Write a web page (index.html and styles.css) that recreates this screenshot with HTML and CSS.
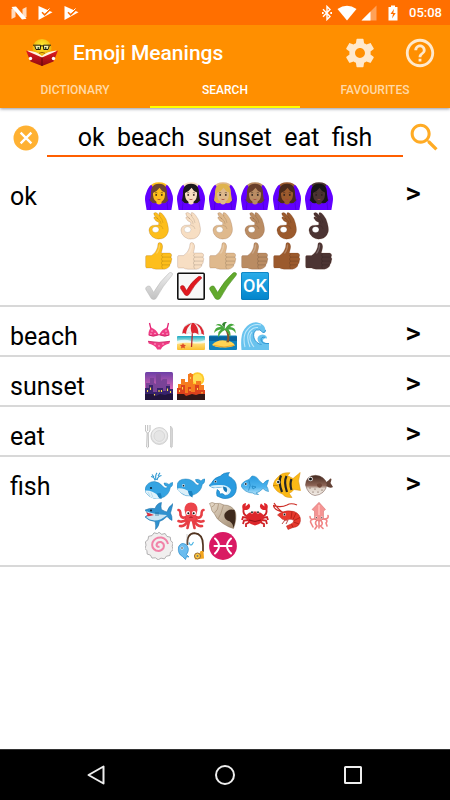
FILE: index.html
```html
<!DOCTYPE html>
<html lang="en">
<head>
<meta charset="utf-8">
<meta name="viewport" content="width=device-width, initial-scale=1">
<title>Emoji Meanings</title>
<link rel="stylesheet" href="styles.css">
</head>
<body>
<svg class="defs" aria-hidden="true">
  <defs>
    <linearGradient id="g-blue" x1="0" y1="0" x2="0" y2="1"><stop offset="0" stop-color="#2a9be0"/><stop offset=".6" stop-color="#4db4ee"/><stop offset="1" stop-color="#b9e4fa"/></linearGradient>
    <linearGradient id="g-ok" x1="0" y1="0" x2="0" y2="1"><stop offset="0" stop-color="#2badea"/><stop offset="1" stop-color="#0284cb"/></linearGradient>
    <linearGradient id="g-dusk" x1="0" y1="0" x2="0" y2="1"><stop offset="0" stop-color="#6b3fa6"/><stop offset=".6" stop-color="#d765b4"/><stop offset="1" stop-color="#f49ac0"/></linearGradient>
    <linearGradient id="g-sand" x1="0" y1="0" x2="0" y2="1"><stop offset="0" stop-color="#19a7c4"/><stop offset=".4" stop-color="#b9ecdf"/><stop offset=".5" stop-color="#ffe082"/><stop offset="1" stop-color="#fbc02d"/></linearGradient>
    <linearGradient id="g-silver" x1="0" y1="0" x2="0" y2="1"><stop offset="0" stop-color="#ededed"/><stop offset="1" stop-color="#c2c2c2"/></linearGradient>
    <linearGradient id="g-puffer" x1="0" y1="0" x2="0" y2="1"><stop offset="0" stop-color="#43291f"/><stop offset=".5" stop-color="#8d6455"/><stop offset=".65" stop-color="#ddd0c6"/><stop offset="1" stop-color="#f4efe9"/></linearGradient>
    <linearGradient id="g-shell" x1="0" y1="0" x2="1" y2="1"><stop offset="0" stop-color="#e8dccb"/><stop offset="1" stop-color="#a08a70"/></linearGradient>
    <radialGradient id="g-face" cx=".5" cy=".35" r=".65"><stop offset="0" stop-color="#ffee35"/><stop offset="1" stop-color="#eda400"/></radialGradient>
    <linearGradient id="g-book" x1="0" y1="0" x2="0" y2="1"><stop offset="0" stop-color="#e31b23"/><stop offset="1" stop-color="#8d0b10"/></linearGradient>
  </defs>
  <symbol id="ok-woman" viewBox="0 0 28 28">
    <path class="skin" d="M4.500 5Q7 .3 14 .3 21 .3 23.500 5L21 8H7Z"/>
    <path d="M6.300 2.800Q3 5 1.200 11-.6 15 .3 20L1.600 28H26.400L27.700 20Q28.600 15 26.800 11 25 5 21.700 2.800L19.500 6 21 14 19 20H9L7 14 8.500 6Z" fill="#6200ff"/>
    <path d="M4 17 6 21 5.200 28M24 17 22 21 22.800 28" fill="none" stroke="#4b00cf" stroke-width=".7"/>
    <path class="hair" d="M14 1.800C7.500 1.800 5.800 6.500 6 12L5 18.500Q7.500 22 11 21H17Q20.500 22 23 18.500L22 12C22.200 6.500 20.500 1.800 14 1.800Z"/>
    <path class="skin" d="M11.500 17H16.500V21.500Q14 23.500 11.500 21.500Z"/>
    <path class="skin" d="M8 11Q12 9.500 14.600 5.800 16 9 20 10.500V13Q19.500 20 14 20.500 8.500 20 8 13Z"/>
    <path d="M10 10.900Q11.200 10.200 12.300 10.900M15.700 10.900Q16.800 10.200 18 10.900" stroke="#35251e" stroke-width=".5" fill="none"/>
    <circle cx="11.200" cy="12.900" r=".9" fill="#2c211e"/><circle cx="16.800" cy="12.900" r=".9" fill="#2c211e"/>
    <path d="M11.600 16.800Q14 17.400 16.400 16.800 14 19 11.600 16.800Z" fill="#a2463d"/>
  </symbol>
  <symbol id="ok-hand" viewBox="0 0 28 28">
    <path class="skin edge" d="M8.800 1.200Q10.500-.4 12.400 1.400L15 4Q13 1.400 14.600.6 16.200 0 18.500 3.200 21.800 7 22.500 11.500 24 17 23.200 20 21.400 25.600 16.500 26.800 11 28 7.500 25 3.700 21.500 3.900 18 4.200 14.400 7.400 13.400L13.600 13 13.800 10.400Q10 9 8.900 6.200 8.500 4.700 10 4.800L13 6.800Q8 3.200 8.800 1.200Z"/>
    <ellipse cx="10.600" cy="17.600" rx="3.300" ry="2.900" fill="#fff" stroke="#0003" stroke-width=".5"/>
    <path d="M14.400 4Q17.500 7 18 11M12.600 6.600Q16 8.500 16.200 12.200M14.200 13.400Q17.600 13.600 18 17" fill="none" stroke="#0002" stroke-width=".8"/>
  </symbol>
  <symbol id="thumb" viewBox="0 0 28 28">
    <path class="skin edge" d="M1.500 13.600H6.500Q11.600 10 12.600 5L13 1.600Q14.200-.4 16.200 1 18.500 3 17.200 7.600L16.300 11H24.600Q27 11.500 26.600 13.800L26 15.200Q27.600 16.600 26.300 19 26.600 21 25 22.600 25 24.500 23.200 25.600 22 27 19.600 27.200H11Q8 27 6.600 26H1.500Q.6 25.800.6 24V15Q.6 13.800 1.500 13.600Z"/>
    <path d="M17.600 15.100H26M17.200 19.100H26.200M17.200 22.900H25M17.600 12Q15.600 13.500 17.600 15.100 15.400 17 17.300 19.100 15.400 21 17.200 22.900 16 25 17.800 26.800" fill="none" stroke="#0003" stroke-width=".7"/>
    <path d="M14.500 2.500Q14.800 7 11.500 11.500" fill="none" stroke="#fff4" stroke-width="1.200"/>
  </symbol>
  <symbol id="check" viewBox="0 0 28 28"><path d="M1.200 15.200Q3 13.200 5 14.300L8.600 20.400Q15 9 24.300.8 26-.2 27.300 1.300 27.800 2.500 26.800 3.700 17.600 14 11 26.600 8.600 28.600 6.300 26.600L.8 17.400Q.4 16 1.200 15.200Z"/></symbol>
</svg>

<div class="screen">
  <header>
    <div class="status">
      <div class="group">
        <svg class="i16" viewBox="0 0 16 14"><path d="M.500 3 4.500 1V11L.500 13ZM11.500 3 15.500 1V11L11.500 13Z" fill="#fff" opacity=".75"/><path d="M.500 1 5 .6 15.500 12.800 11 13.400Z" fill="#fff"/></svg>
        <svg class="i16" viewBox="0 0 16 14"><path d="M1.500 0 15.500 6.200 1.500 14Z" fill="#fff"/><path d="m5 6.300 2.600 2.600L14 2.600" stroke="#ff6f00" stroke-width="1.500" fill="none"/><path d="m8.500 6.500 4-4" stroke="#fff" stroke-width="1"/></svg>
        <svg class="i16" viewBox="0 0 16 14"><path d="M1.500 0 15.500 6.200 1.500 14Z" fill="#fff"/><path d="m5 6.300 2.600 2.600L14 2.600" stroke="#ff6f00" stroke-width="1.500" fill="none"/><path d="m8.500 6.500 4-4" stroke="#fff" stroke-width="1"/></svg>
      </div>
      <div class="group right">
        <div class="radios">
          <svg class="i12" viewBox="0 0 12 16"><path d="M2 4.300 9 11.400 6 14.500V1.500L9 4.600 2 11.700" fill="none" stroke="#fff" stroke-width="1.400"/><path d="M1 7h1.700v2H1zM9.300 7H11v2H9.300z" fill="#fff"/></svg>
          <svg class="i20" viewBox="0 0 20 16"><path d="M.5 4Q10-2.500 19.500 4L10 15.500Z" fill="#fff"/></svg>
          <svg class="i16" viewBox="0 0 16 16"><path d="M15.500.5V15.500H.5Z" fill="#fff" opacity=".35"/><path d="M9.500 6.500V15.500H.5Z" fill="#fff"/></svg>
        </div>
        <svg class="i12" viewBox="0 0 12 16"><path d="M4 .5h4V2h2.500v13.500h-9V2H4Z" fill="#fff"/><path d="M7 4 3.500 9H6l-1 4.500L8.700 8H6.300Z" fill="#ff6f00"/></svg>
        <time>05:08</time>
      </div>
    </div>
    <div class="appbar">
      <svg class="logo" viewBox="0 0 34 30">
        <circle cx="17" cy="10.500" r="9.500" fill="url(#g-face)"/>
        <circle cx="13" cy="9.500" r="2.800" fill="#f8f0aa"/><circle cx="21" cy="9.500" r="2.800" fill="#f8f0aa"/>
        <path d="M8 7.200H15.600L15.300 11.500H11L9.800 8M26 7.200H18.400L18.700 11.500H23L24.200 8M15.600 8.200Q17 7.200 18.400 8.200" fill="none" stroke="#231b08"/>
        <circle cx="13.400" cy="10" r="1" fill="#24502e"/><circle cx="20.600" cy="10" r="1" fill="#24502e"/>
        <path d="M14 15.300Q17 13.500 20 15.300" stroke="#9a6500" fill="none"/>
        <path d="M2.500 12.600Q12 13.500 17 18 22 13.500 31.500 12.600L29 17 17 24 5 17Z" fill="#fff4df"/>
        <path d="M1 12.500 17 19.400 33 12.500 28.500 23.500 17 28 5.500 23.500Z" fill="url(#g-book)"/>
        <path d="M17 19.400V28" stroke="#650509"/>
        <circle cx="5.500" cy="20.500" r="1.700" fill="#fff"/><circle cx="28.500" cy="20.500" r="1.700" fill="#fff"/>
      </svg>
      <h1>Emoji Meanings</h1>
      <button class="action" aria-label="Settings"><svg viewBox="0 0 24 24"><path d="M19.430 12.980c.04-.32.07-.64.07-.98s-.03-.66-.07-.98l2.110-1.650c.19-.15.24-.42.12-.64l-2-3.460c-.12-.22-.39-.3-.61-.22l-2.490 1c-.52-.4-1.080-.73-1.690-.98l-.38-2.650C14.460 2.180 14.250 2 14 2h-4c-.25 0-.46.18-.49.42l-.38 2.650c-.61.25-1.170.59-1.690.98l-2.490-1c-.23-.09-.49 0-.61.22l-2 3.460c-.13.22-.07.49.12.64l2.110 1.650c-.04.32-.07.65-.07.98s.03.66.07.98l-2.110 1.650c-.19.15-.24.42-.12.64l2 3.460c.12.22.39.3.61.22l2.490-1c.52.4 1.080.73 1.690.98l.38 2.650c.03.24.24.42.49.42h4c.25 0 .46-.18.49-.42l.38-2.650c.61-.25 1.170-.59 1.690-.98l2.490 1c.23.09.49 0 .61-.22l2-3.460c.12-.22.07-.49-.12-.64l-2.110-1.650zM12 15.500c-1.930 0-3.500-1.570-3.500-3.500s1.570-3.500 3.500-3.500 3.500 1.570 3.500 3.500-1.570 3.500-3.500 3.500z"/></svg></button>
      <button class="action" aria-label="Help"><svg viewBox="0 0 24 24"><path d="M11 18h2v-2h-2v2zm1-16C6.480 2 2 6.480 2 12s4.480 10 10 10 10-4.480 10-10S17.520 2 12 2zm0 18c-4.410 0-8-3.590-8-8s3.590-8 8-8 8 3.590 8 8-3.590 8-8 8zm0-14c-2.210 0-4 1.790-4 4h2c0-1.100.9-2 2-2s2 .9 2 2c0 2-3 1.750-3 5h2c0-2.250 3-2.500 3-5 0-2.210-1.790-4-4-4z"/></svg></button>
    </div>
    <nav class="tabs">
      <a href="#dictionary">DICTIONARY</a>
      <a href="#search" class="active" aria-current="page">SEARCH</a>
      <a href="#favourites">FAVOURITES</a>
    </nav>
  </header>

  <main>
    <form class="search">
      <button type="reset" class="clear" aria-label="Clear"><svg viewBox="0 0 24 24"><circle cx="12" cy="12" r="10" fill="#ffb132"/><path d="m7.700 7.700 8.600 8.600M16.300 7.700l-8.600 8.600" stroke="#fff" stroke-width="1.900"/></svg></button>
      <input type="text" aria-label="Search words" value="ok  beach  sunset  eat  fish">
      <button type="button" class="go" aria-label="Search"><svg viewBox="0 0 24 24"><path fill="#ffab24" d="M15.500 14h-.79l-.28-.27C15.410 12.590 16 11.110 16 9.500 16 5.910 13.090 3 9.500 3S3 5.910 3 9.500 5.910 16 9.500 16c1.610 0 3.090-.59 4.230-1.570l.27.28v.79l5 4.990L20.490 19l-4.990-5zm-6 0C7.010 14 5 11.990 5 9.500S7.010 5 9.500 5 14 7.010 14 9.500 11.990 14 9.500 14z"/></svg></button>
    </form>

    <ul class="results">
      <li>
        <h2>ok</h2>
        <div class="emojis">
          <svg class="t0"><use href="#ok-woman"/></svg><svg class="t1"><use href="#ok-woman"/></svg><svg class="t2"><use href="#ok-woman"/></svg><svg class="t3"><use href="#ok-woman"/></svg><svg class="t4"><use href="#ok-woman"/></svg><svg class="t5"><use href="#ok-woman"/></svg>
          <svg class="t0"><use href="#ok-hand"/></svg><svg class="t1"><use href="#ok-hand"/></svg><svg class="t2"><use href="#ok-hand"/></svg><svg class="t3"><use href="#ok-hand"/></svg><svg class="t4"><use href="#ok-hand"/></svg><svg class="t5"><use href="#ok-hand"/></svg>
          <svg class="t0"><use href="#thumb"/></svg><svg class="t1"><use href="#thumb"/></svg><svg class="t2"><use href="#thumb"/></svg><svg class="t3"><use href="#thumb"/></svg><svg class="t4"><use href="#thumb"/></svg><svg class="t5"><use href="#thumb"/></svg>
          <svg viewBox="0 0 28 28"><use href="#check" fill="url(#g-silver)" stroke="#b4b4b4" stroke-width=".5"/></svg>
          <svg viewBox="0 0 28 28"><rect x=".8" y="1.200" width="26.400" height="26" rx="1" fill="#f8f8f8" stroke="#111" stroke-width="1.600"/><path d="M3.500 14.500Q5 12.600 7 14L9.500 18.500Q14 10 21.500 4.500 24 3.500 24.800 6 17 13 12.200 22.300 10.300 25 7.800 22.800L3.600 16.500Z" fill="#e0181f" stroke="#a90d12" stroke-width=".5"/></svg>
          <svg viewBox="0 0 28 28"><use href="#check" fill="#62a92d" stroke="#458b1a" stroke-width=".6"/></svg>
          <svg viewBox="0 0 28 28"><rect width="28" height="28" rx="2" fill="url(#g-ok)"/><rect x=".4" y=".4" width="27.200" height="27.200" rx="1.800" fill="none" stroke="#0878b7" stroke-width=".8"/><text x="14" y="20" text-anchor="middle" class="ok-text">OK</text></svg>
        </div>
        <button class="more" aria-label="Open ok">&gt;</button>
      </li>
      <li>
        <h2>beach</h2>
        <div class="emojis">
          <svg viewBox="0 0 28 28"><path d="M4.500 1 6.300 8.500M23.500 1 21.700 8.500" stroke="#e22374" stroke-width="1.300"/><path d="M6 5.500Q11.500 7.500 13.800 12.800 8 15.500 3.600 13 3 9 6 5.500ZM22 5.500Q16.500 7.500 14.200 12.800 20 15.500 24.400 13 25 9 22 5.500ZM3 19.300Q14 21.500 25 19.300L24.300 21.600Q18 23 15.800 27.400H12.200Q10 23 3.700 21.600Z" fill="#ef3c85"/><path d="M3.600 13Q8 15.500 13.800 12.800H14.200Q20 15.500 24.400 13M3 19.300Q14 21.500 25 19.300" fill="none" stroke="#c9175c" stroke-width=".8"/><g fill="#ffb5d2"><circle cx="7" cy="9" r=".8"/><circle cx="10" cy="11.500" r=".8"/><circle cx="6" cy="12" r=".8"/><circle cx="21" cy="9" r=".8"/><circle cx="18" cy="11.500" r=".8"/><circle cx="22" cy="12" r=".8"/><circle cx="10" cy="22" r=".8"/><circle cx="14" cy="24" r=".8"/><circle cx="18" cy="22" r=".8"/></g></svg>
          <svg viewBox="0 0 28 28"><rect y="14" width="28" height="14" rx="1" fill="url(#g-sand)"/><path d="M0 19Q8 16.500 14 19T28 18V21Q20 22 14 21T0 22Z" fill="#fff" opacity=".7"/><path d="M16 1 14.500 25" stroke="#b6262e" stroke-width="1.200"/><path d="M5.300 11.500Q6 1 16 .9 27 2 27 13 24 10.500 21.500 12.500 18 9.500 15 12 11.500 9.500 9 12 7 10.500 5.300 11.500Z" fill="#f4f4f4" stroke="#bbb" stroke-width=".4"/><path d="M5.300 11.500Q6 3 15 1 9.500 5 9 12 7 10.500 5.300 11.500ZM15 1H17Q21.500 5 21.500 12.500 18 9.500 15 12 12.500 5 15 1ZM18 1.200Q27 3.500 27 13 25.500 11.800 24.500 11.700 24 5 18 1.200Z" fill="#dd2630"/><path d="m6 21 .9 1.800 2.100.2-1.500 1.400.5 2.200-2-1.100-2 1.100.4-2.200L2.900 23l2.200-.2Z" fill="#dd4b27"/></svg>
          <svg viewBox="0 0 28 28"><rect y="13.500" width="28" height="14.500" rx="1" fill="#0f82bd"/><path d="M0 14.500H28V19H0Z" fill="#08639d"/><path d="M3 23Q8 17.500 16 18.500 24 19 26 23.500 20 26 14 25.300 7 26 3 23Z" fill="#ffd454"/><path d="M5 23.500Q15 26.500 25 23.500" stroke="#e9a62c" fill="none"/><path d="M15.500 7Q20 13 17.300 20.200H20Q21.500 12 17.500 6.500Z" fill="#85532a"/><path d="M16 7Q11-.5 6.500 3.500 10 2.500 12 5 6 4 5 11 8 7.500 12 7.500 8 10 9.500 15.500 11 10 16 8 19 9.500 21 15 22.600 11 19.500 7.500 25 7 26.500 11.500 27.500 5.500 21 5 24 2.500 26 3.500 21-1.500 16 7Z" fill="#48a83d"/><path d="M16 7Q15 1.500 18 0 14-.5 13 2.500Z" fill="#33852f"/></svg>
          <svg viewBox="0 0 28 28"><path d="M.5 28Q-1 13 3.500 7 9-.5 16.500.4 24 2 24.500 8 24.600 11 22 10.500 19 6.500 15.500 8 11.500 10 13 16 15 21.500 20.500 22.500 16.500 20.500 16.500 16.500 17 13 21.500 12.500 26 13 26 16.500 23 15.500 22 18 21.500 21 28 21.500V28Z" fill="#69c3ee"/><path d="M4 25Q1 13 7 7 12 1 20 3M9 25Q4 13 10 8 13 5 17 5.500M13 25Q6 16 11 10" fill="none" stroke="#bde7fa" stroke-width="1.100"/><path d="M24.500 8Q24.600 11 22 10.500 19 6.500 15.500 8 11.500 10 13 16 15 21.500 20.500 22.500M24 15.300Q20 14.500 20 18 21 22 28 21.500" fill="none" stroke="#2790ce" stroke-width=".9"/></svg>
        </div>
        <button class="more" aria-label="Open beach">&gt;</button>
      </li>
      <li>
        <h2>sunset</h2>
        <div class="emojis">
          <svg viewBox="0 0 28 28"><rect width="28" height="28" rx="1.500" fill="url(#g-dusk)"/><path d="M1 28V11H5V6H9V11L11 12V2H16V9L18 7H22V12H25V28Z" fill="#794397"/><path d="M0 28V16H4V13H8V20H12V16H18V19H21V14H25V17H28V28Z" fill="#37236b"/><path d="M0 28V22H8L11 24 15 22 20 23 23 22H28V28Z" fill="#21143d"/><path d="M5.500 15.500V18M2.500 18V20M14 18V20M16.500 18V20M22.500 16.500V19M25.500 19V21M9.500 22V23.500" stroke="#ffe046" stroke-width="1.100"/></svg>
          <svg viewBox="0 0 28 28"><circle cx="20.500" cy="7" r="6.800" fill="#ffc928"/><circle cx="20.500" cy="7" r="5" fill="#ffe056"/><path d="M1 28V12H4V7H8V10H11V2H12.500V1H14.500V2H16V12H19V9H24V13H27V28Z" fill="#f57c1f"/><path d="M0 28V16H4V13H8V21H11V15H14V20H18V13H22V18H28V28Z" fill="#dc421d"/><path d="M0 28V22H7L9 24 15 22 19 23 22 22H28V28Z" fill="#321717"/><path d="M5.500 15V17.500M2.500 18V20M13 17V19M13.500 5V7M20.500 16V18M25 20V21.500" stroke="#ffd749" stroke-width="1.100"/></svg>
        </div>
        <button class="more" aria-label="Open sunset">&gt;</button>
      </li>
      <li>
        <h2>eat</h2>
        <div class="emojis">
          <svg viewBox="0 0 28 28"><ellipse cx="14.300" cy="14" rx="8.500" ry="8.500" fill="#dedede" stroke="#bfbfbf" stroke-width=".6"/><circle cx="14.300" cy="13.600" r="7.400" fill="#ececec"/><circle cx="14.300" cy="14" r="5.400" fill="#e5e5e5" stroke="#d0d0d0" stroke-width=".7"/><path d="M.4 3V8Q.7 10.300 2.200 10.600L1.700 25Q2.500 26.500 3.500 25L3.200 10.600Q4.700 10.300 5 8V3M2.700 3V9" fill="none" stroke="#b6b6b6" stroke-width=".9"/><path d="M25.500 25V4Q27.800 5.500 27.700 9V16L27.200 25Q26.500 26.500 25.500 25Z" fill="#d6d6d6" stroke="#b3b3b3" stroke-width=".5"/></svg>
        </div>
        <button class="more" aria-label="Open eat">&gt;</button>
      </li>
      <li>
        <h2>fish</h2>
        <div class="emojis">
          <svg viewBox="0 0 28 28"><path d="M10 8.500Q9.500 5 6 4.500M11 8Q10 3 12 .8M12 8Q13 4 16.500 3.500M7 2.500 9 5M15 .8 13 4" fill="none" stroke="#2c97d1" stroke-width="1.100"/><path d="M0 17Q2 9.500 9.500 9.500 14.500 10 18 14.500 21.500 17.500 22.500 14.500 19 14 19 11 21.500 10.500 24 12.500 25.500 10.500 28 10.500 28 14 25.300 15.500 24 24 16 26 9 28 4 24 0 21 0 17Z" fill="#36a4e2" stroke="#1c80ba" stroke-width=".5"/><path d="M.2 18.500Q7 18 13 23.500L14.500 26.500Q8 27.700 4 24 .5 21.700.2 18.500Z" fill="#e1f3fb"/><path d="M3 20 5 24M6 20.500 8 25.500" stroke="#9fcbdf" stroke-width=".6"/><path d="M12 21.500Q13 26 16.500 27 17 23.500 15.500 21Z" fill="#1b82bf"/><circle cx="6" cy="16" r="1.100" fill="#123"/></svg>
          <svg viewBox="0 0 28 28"><path d="M0 14Q.5 7 8.500 7 15 7 18.500 12 21.500 14.500 22.300 11.500 18.500 10.500 18.500 7.500 21.800 6.500 24 9 25.500 6.800 28 7 28.300 10.500 25.300 12.500 24 20.500 16 23 9 25.500 3.500 20.500 0 18 0 14Z" fill="#36a4e2" stroke="#1c80ba" stroke-width=".5"/><path d="M.3 16.500Q7 15.500 13 20.500L13.500 23.600Q8 24 3.500 20.500 .5 18.500.3 16.500Z" fill="#dceff8"/><path d="M11 19Q11.500 24 15.500 25.500 16.500 22 14.800 19Z" fill="#1b82bf"/><circle cx="6.500" cy="13.500" r="1.500" fill="#e8f5fb"/><circle cx="6.500" cy="13.700" r=".9" fill="#123"/></svg>
          <svg viewBox="0 0 28 28"><path d="M0 13.500 2.500 11Q5 5.500 11.500 4 14 .5 20.500.5 19 2 19.200 4 28 8 27.400 16 27 24 20 26 14.500 28 8 24 7 21 8.200 17.500 11 18.500 10.800 22 14 20.500 16 23.500 21 22.500 21.500 17.500 16 13.500 13 15L8 15.500Q4 17 0 13.500Z" fill="#299be0" stroke="#147ab8" stroke-width=".6"/><path d="M1 14Q6 12.500 12 13 19 13 22 18 21 22.500 16.500 23.600 19.800 20.500 18 17.500 14.500 14.500 8 15.500 4 16.500 1 14Z" fill="#d8f0fb"/><path d="M14 14.500Q14 19 17.500 20.500 19 18 17.500 15.500Z" fill="#1679b7"/><circle cx="6.500" cy="9.500" r="1.300" fill="#fff"/><circle cx="6.500" cy="9.600" r=".9" fill="#123"/></svg>
          <svg viewBox="0 0 28 28"><path d="M8 7.500 11 4Q16 4 18 8.500L22 12Q25 8 27.500 8 26.500 12 25.500 14 27 16 27.500 19.500 24 19 22 16.500 18 20.500 15 21L17.500 22.500 13 22 12 21Q4 21 0 14 1 9.500 8 7.500Z" fill="url(#g-blue)" stroke="#238bc5" stroke-width=".6"/><path d="M8 8.500Q10.500 13.500 7.500 18.500M11 14 15 15 12 17Z" fill="none" stroke="#1b81bd" stroke-width=".7"/><circle cx="4.800" cy="12" r="1.500" fill="#fff"/><circle cx="4.800" cy="12" r=".9" fill="#123"/></svg>
          <svg viewBox="0 0 28 28"><path d="M5 5Q9 0 17 .8L14.500 3.500 20 6.500 27.200.5 25.500 9 27.500 18.500 21 17.500Q18 21 16 21L19 25.500Q12 26 9.500 22 3 20 0 13.500 1 8 5 5Z" fill="#fbb916" stroke="#d99006" stroke-width=".5"/><path d="M8 3.500Q5 10 9 20M13.500 4Q10.500 10 14 20M18.500 7Q16.500 12 18.500 18" fill="none" stroke="#242426" stroke-width="2.200"/><path d="M0 13.500Q3 13 5 14" stroke="#cc8709" fill="none"/><circle cx="5.300" cy="10" r="2" fill="#fff"/><circle cx="5.300" cy="10" r="1.300" fill="#182a37"/></svg>
          <svg viewBox="0 0 28 28"><path d="M20 11 24 8Q26 5.500 26.500 7.500L25.500 11 28 15Q25.500 17 21 14Z" fill="#634236"/><path d="M.5 13Q1 3.500 10.500 3.300 20 4 22 12.500 20 22.500 10 23.500 3 22.500.5 13Z" fill="url(#g-puffer)" stroke="#68493c" stroke-width=".5"/><path d="M12 12Q17 10 17 14 15 17.500 12 14Z" fill="#71493a"/><g fill="#5e4337"><circle cx="5" cy="16" r=".6"/><circle cx="8" cy="20" r=".6"/><circle cx="13" cy="20" r=".6"/><circle cx="10" cy="17" r=".6"/><circle cx="17" cy="18" r=".6"/></g><circle cx="5.500" cy="7" r="2.300" fill="#fff"/><circle cx="5.500" cy="7" r="1.500" fill="#111"/></svg>

          <svg viewBox="0 0 28 28"><path d="M0 8Q5 5.500 10 6.500 12 1 16.500.5 15.500 4.500 16.500 7.500 20 9.500 22 10 23 5 28 1.500 26.500 8 25.500 11 27.500 14.500 27 18.500 23.500 16.500 22 14.500 18 18.500 14.500 19.500 14 24.500 10.500 27.500 11 23 10 19.500 4 19 0 15 1 13.500 4 13Z" fill="#2f91cf" stroke="#1c6fa5" stroke-width=".5"/><path d="M1 9Q8 12.500 22 13 16 18.500 9.500 18.500 4 18 1 15L5 12.700Z" fill="#cbe5f3"/><path d="M1 10.500Q5 11 9 13 5 14.500 1.500 14 3.500 13 1 10.500Z" fill="#dd3341"/><path d="M11 10V14M13 10V14" stroke="#1e658f" stroke-width=".7"/><circle cx="6" cy="8.400" r="1" fill="#123"/></svg>
          <svg viewBox="0 0 28 28"><g fill="none" stroke="#e73e44" stroke-width="2.600" stroke-linecap="round"><path d="M9 15Q5 17 3.500 13 3.500 8 1.500 8M19 15Q23 17 24.500 13 24.500 8 26.500 8M10 17Q6 21 1.500 19M18 17Q22 21 26.500 19M11 18Q8 25 3 24M17 18Q20 25 25 24M12 19 10.500 26M16 19 17.500 26"/></g><path d="M7.500 8Q7.500.5 14 .4 20.500.5 20.500 8L19 14Q20 19 14 19.500 8 19 9 14Z" fill="#ec444a"/><circle cx="11" cy="11" r="2" fill="#fff"/><circle cx="17" cy="11" r="2" fill="#fff"/><circle cx="11.300" cy="11.200" r="1" fill="#111"/><circle cx="16.700" cy="11.200" r="1" fill="#111"/><path d="M12.500 15.500Q14 14.500 15.500 15.500" stroke="#9d1623" fill="none"/></svg>
          <svg viewBox="0 0 28 28"><path d="M.5 1.500Q3-.5 6 1.500 11 .5 15 3 23 3 26.500 10 28 17 24.500 26.500 19 25 14 21.500 7 17 5.500 12 2 9 2 5Z" fill="url(#g-shell)" stroke="#877056" stroke-width=".5"/><path d="M15.500 12Q19 6 25.500 8 28 16 24.500 26 24 20 18.500 18.500 14.500 16 15.500 12Z" fill="#3e291c"/><path d="M2.500 5Q5 4.500 6 1.500M5.500 11Q9.500 8 9.500 2M9 17Q12 13 14.500 3" stroke="#a58d72" stroke-width=".7" fill="none"/></svg>
          <svg viewBox="0 0 28 28"><g fill="none" stroke="#cf2025" stroke-width="1.800"><path d="M6 14Q1 12 3 6M22 14Q27 12 25 6M7 16 2 15 1 18M21 16 26 15 27 18M8 18 3 18.500 2 22M20 18 25 18.500 26 22M9 20 5 22 5 25M19 20 23 22 23 25"/></g><path d="M2 8Q-.5 2 5 1L4.500 4.500 8 1.500Q11 6 6 8ZM26 8Q28.500 2 23 1L23.500 4.500 20 1.500Q17 6 22 8Z" fill="#df262b"/><path d="M5 14Q8 9 14 9.500 20 9 23 14 23 21.500 14 23.500 5 21.500 5 14Z" fill="#dc262b"/><path d="M8 18Q14 21 20 18" stroke="#951116" fill="none"/><circle cx="11" cy="10" r="1.500" fill="#fff"/><circle cx="17" cy="10" r="1.500" fill="#fff"/><circle cx="11" cy="10.200" r=".9" fill="#111"/><circle cx="17" cy="10.200" r=".9" fill="#111"/></svg>
          <svg viewBox="0 0 28 28"><path d="M10 10Q1 8 .5 3.500 8 6 14 3 18 .5 24 3M9 10Q4 6 1 1" fill="none" stroke="#cc2c24" stroke-width="1.200"/><path d="M7 11Q14 7.500 21 9.500 28 12 27.400 19 26.500 25 20 25.500L15 27.500 13.500 24 18 22Q22 20 20 17.500 16 16.500 13 18.500 9 18 7 15L4.500 13Z" fill="#e6392d" stroke="#b51e18" stroke-width=".5"/><path d="M19 9.500 18 16.500M23 11 20 17.500M27 15.500 21 18.500M26 22 20.500 20M20 25.500 18.500 22M12 18 9 22M15 18 13 22" stroke="#a91d17" stroke-width=".8"/><circle cx="11.500" cy="12.500" r="1.400" fill="#fff"/><circle cx="11.500" cy="12.500" r=".9" fill="#111"/></svg>
          <svg viewBox="0 0 28 28"><g fill="none" stroke="#f18484" stroke-width="1.600" stroke-linecap="round"><path d="M11 17Q4 17 6 21T8 25M17 17Q24 17 21 21L22 24M12 18Q9 21 12 24L10 27M15.500 18Q19 22 15.500 24L18 26.500M14 18V26M5 14.500Q5 18 9 17M23 13.500Q24 17 19 17"/></g><path d="M14 .3 20.500 7.500 18.500 9 18.500 16.500Q17 19 14 19 11 19 9.500 16.500V9L7 7.500Z" fill="#f49493" stroke="#d66667" stroke-width=".5"/><path d="M14 3V13" stroke="#ffb5b1" stroke-width="2"/><circle cx="11.300" cy="15.500" r="1" fill="#fff"/><circle cx="16.800" cy="15.500" r="1" fill="#fff"/><circle cx="11.300" cy="15.700" r=".6" fill="#3b1e22"/><circle cx="16.800" cy="15.700" r=".6" fill="#3b1e22"/></svg>

          <svg viewBox="0 0 28 28"><path d="m14 .3 2.700 2 3.400-.8 1.800 2.900 3.400.8.400 3.400 2.500 2.400-1 3.300 1 3.400-2.700 2.300-.6 3.500-3.500.7-2 2.700-3.400-.8-2.800 1.700-2.800-2-3.400.3-1.600-3-3.200-1-.3-3.400L0 16.500l1-3.300-.6-3.400L3 7.700l.6-3.400L7 3.600 9 .8l3.300.8Z" fill="#f1efef" stroke="#a09e9f" stroke-width=".8"/><path d="M14.500 14.500Q12 15.500 11.500 13 12 9.500 16 10 20 11.500 18.500 16 16 20 11 18.500 6 16 7.500 10.500 10 5 16.500 5.500 22 7 23 12" fill="none" stroke="#f183a8" stroke-width="2"/></svg>
          <svg viewBox="0 0 28 28"><path d="M10.500 13Q9.500 1.500 17.500 1.200 26 2 26 13V20" fill="none" stroke="#51331f" stroke-width="1.700"/><path d="M10 2V15" stroke="#999" stroke-width=".5"/><path d="M1.500 15Q4 9.500 9 12.500 13.500 17 9.500 22.500L12 25 9.500 24.700 8.500 27.500 5.500 24.500Q.5 22 1.500 15Z" fill="#6bbcef" stroke="#258bcb" stroke-width=".7"/><path d="M12 10.500Q13 14 15 12.500L16.500 10" fill="none" stroke="#4ab4e3" stroke-width="1.100"/><circle cx="5" cy="16" r="1.500" fill="#fff"/><circle cx="5" cy="16" r=".8" fill="#123"/><path d="M18 27.500 27 26.500 26.500 19 23.500 19 22.500 22 17 23Z" fill="#f3a51f"/><circle cx="20.500" cy="24" r="3" fill="#ffc93c" stroke="#9b6c32"/><circle cx="20.500" cy="24" r="1" fill="#777"/></svg>
          <svg viewBox="0 0 28 28"><circle cx="14" cy="14" r="13.900" fill="#d91a63"/><path d="M6 6.500Q14 14 6 21.500M22 6.500Q14 14 22 21.500M5.500 14H22.500" fill="none" stroke="#fff" stroke-width="2" stroke-linecap="round"/></svg>
        </div>
        <button class="more" aria-label="Open fish">&gt;</button>
      </li>
    </ul>
  </main>

  <footer class="navbar">
    <button aria-label="Back"><svg viewBox="0 0 24 24"><path d="M18.500 3.500V20.500L3.500 12Z"/></svg></button>
    <button aria-label="Home"><svg viewBox="0 0 24 24"><circle cx="12" cy="12" r="9"/></svg></button>
    <button aria-label="Recent apps"><svg viewBox="0 0 24 24"><rect x="4" y="4" width="16" height="16" rx=".5"/></svg></button>
  </footer>
</div>
</body>
</html>
```
FILE: styles.css
```css
* { box-sizing: border-box; }
body {
  margin: 0;
  font-family: Roboto, "Liberation Sans", sans-serif;
  background: #fff;
  color: #000;
}
button {
  border: 0;
  padding: 0;
  background: none;
  font: inherit;
  color: inherit;
  display: flex;
  align-items: center;
  justify-content: center;
}
svg { display: block; flex: none; }
.defs { position: absolute; width: 0; height: 0; }
.screen {
  min-height: 100vh;
  display: flex;
  flex-direction: column;
}

header {
  background: #ff8f00;
  color: #fff;
  box-shadow: 0 1px 3px rgba(40, 50, 80, .5);
}
.status {
  height: 25px;
  padding: 0 8px 0 11px;
  background: #ff6f00;
  display: flex;
  align-items: center;
  justify-content: space-between;
}
.group { display: flex; align-items: center; gap: 10px; }
.radios { display: flex; align-items: center; gap: 4px; }
.i12 { width: 12px; height: 16px; }
.i16 { width: 16px; height: 16px; }
.i20 { width: 20px; height: 16px; }
time { font-size: 13px; font-weight: 500; }

.appbar {
  height: 55px;
  padding-left: 25px;
  display: flex;
  align-items: center;
}
.logo { width: 34px; height: 30px; }
h1 {
  flex: 1;
  margin: 0 0 0 14px;
  font-size: 21px;
  font-weight: 500;
}
.action { width: 60px; height: 55px; }
.action svg { width: 34px; height: 34px; fill: #ffe9cc; }

.tabs { display: grid; grid-template-columns: repeat(3, 1fr); }
.tabs a {
  height: 28px;
  line-height: 20px;
  border-bottom: 2px solid transparent;
  text-align: center;
  text-decoration: none;
  font-size: 12px;
  font-weight: 500;
  color: #ffd9a6;
}
.tabs .active { color: #fff; border-color: #ff0; }

main { flex: 1; }
.search {
  padding: 10px 0;
  display: grid;
  grid-template-columns: 47px 1fr 47px;
  align-items: center;
}
.search input {
  width: 100%;
  height: 39px;
  padding: 2px 0 0;
  border: 0;
  border-bottom: 2px solid #ff5f00;
  outline: 0;
  background: none;
  font: 25px Roboto, "Liberation Sans", sans-serif;
  text-align: center;
  color: #000;
}
.clear { padding-left: 4px; }
.go { padding-right: 4px; }
.clear svg { width: 30px; height: 30px; }
.go svg { width: 37px; height: 37px; }

.results { list-style: none; margin: 0; padding: 0; }
.results li {
  padding: 14px 14px 4px 10px;
  border-bottom: 2px solid #d8d8d8;
  display: grid;
  grid-template-columns: 135px 1fr 46px;
  align-items: start;
}
h2 {
  margin: 0;
  font-size: 25px;
  line-height: 32px;
  height: 30px;
  font-weight: 400;
}
.emojis {
  display: grid;
  grid-template-columns: repeat(6, 32px);
  grid-auto-rows: 30px;
  align-items: center;
  justify-content: start;
}
.emojis svg { width: 28px; height: 28px; }
.more { height: 22px; font-size: 30px; font-weight: 500; }

.skin { fill: var(--skin); }
.hair { fill: var(--hair); }
.edge { stroke: rgba(80, 30, 0, .25); stroke-width: .6px; }
.t0 { --skin: #fdbe1c; --hair: #6d4530; }
.t1 { --skin: #f7dec3; --hair: #1d1a1b; }
.t2 { --skin: #dfb98d; --hair: #dfb34d; }
.t3 { --skin: #ba8c63; --hair: #69402c; }
.t4 { --skin: #9b5a2d; --hair: #4a2b1a; }
.t5 { --skin: #4c3433; --hair: #171516; }
.ok-text { font-size: 18px; font-weight: 500; fill: #fff; }

.navbar {
  height: 51px;
  padding: 0 33px;
  background: #000;
  border-top: 1px solid #333;
  display: grid;
  grid-template-columns: repeat(3, 1fr);
}
.navbar svg {
  width: 24px;
  height: 24px;
  fill: none;
  stroke: #eee;
  stroke-width: 2;
  stroke-linejoin: round;
}
```
